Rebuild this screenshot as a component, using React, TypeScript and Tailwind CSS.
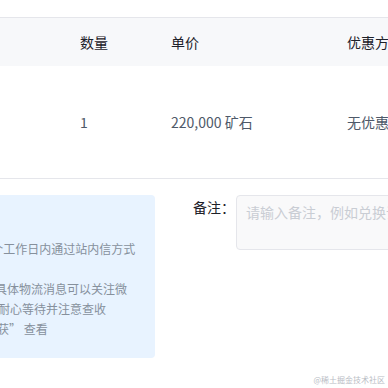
import React from "react";

const infoLines = [
  { text: "3 个工作日内通过站内信方式", ml: "-ml-[18px]" },
  { text: "", ml: "" },
  { text: "，具体物流消息可以关注微", ml: "-ml-[17px]" },
  { text: "请耐心等待并注意查收", ml: "-ml-[14px]" },
  { text: "收获” 查看", ml: "-ml-[15px]" },
];

const App: React.FC = () => {
  return (
    <div className="relative w-[388px] h-[388px] overflow-hidden bg-white font-['Noto_Sans_CJK_SC',sans-serif] text-[14px]">
      {/* table */}
      <div className="h-[18px] border-b border-[#e5e6eb]" />
      <div className="flex h-[48px] items-center bg-[#f7f8fa] text-[#1d2129] leading-[22px]">
        <div className="w-[80px] shrink-0" />
        <div className="w-[91px] shrink-0">数量</div>
        <div className="w-[176px] shrink-0">单价</div>
        <div className="whitespace-nowrap">优惠方式</div>
      </div>
      <div className="flex h-[113px] items-center border-b border-[#e5e6eb] text-[#4e5969] leading-[22px]">
        <div className="w-[80px] shrink-0" />
        <div className="w-[91px] shrink-0">1</div>
        <div className="w-[176px] shrink-0 whitespace-nowrap">220,000 矿石</div>
        <div className="whitespace-nowrap">无优惠</div>
      </div>

      {/* tips + remark */}
      <div className="mt-[16px] flex">
        <div className="h-[163px] w-[155px] shrink-0 overflow-hidden rounded-r-[4px] bg-[#e8f3ff] pt-[44px] text-[12px] leading-[20px] text-[#86909c]">
          {infoLines.map((l, i) => (
            <div key={i} className={`h-[20px] whitespace-nowrap ${l.ml}`}>
              {l.text}
            </div>
          ))}
        </div>
        <div className="ml-[38px] shrink-0 leading-[24px] text-[#1d2129]">备注：</div>
        <textarea
          className="ml-[1px] h-[55px] w-[200px] shrink-0 resize-none rounded-[4px] border border-[#e5e6eb] bg-[#f9f9fa] px-[9px] py-[5px] text-[14px] leading-[22px] outline-none placeholder:text-[#c9cdd4]"
          placeholder="请输入备注，例如兑换说明"
        />
      </div>

      <div className="absolute bottom-[3px] right-[3px] text-[8px] leading-[10px] text-[#b8bcc4]">
        @稀土掘金技术社区
      </div>
    </div>
  );
};

export default App;
